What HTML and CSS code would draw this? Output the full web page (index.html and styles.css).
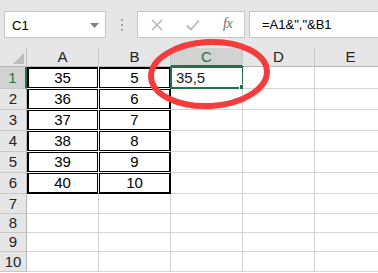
FILE: index.html
```html
<!DOCTYPE html>
<html>
<head>
<meta charset="utf-8">
<link rel="stylesheet" href="styles.css">
</head>
<body>
<div class="app">
  <div class="toolbar">
    <div class="namebox">
      <span class="name">C1</span>
      <svg class="dd" width="9" height="5" viewBox="0 0 9 5"><polygon points="0,0 9,0 4.5,5" fill="#808080"/></svg>
    </div>
    <div class="grip"><i></i><i></i><i></i></div>
    <div class="fbtns">
      <svg class="ico" width="12" height="12" viewBox="0 0 12 12"><path d="M1 1 L11 11 M11 1 L1 11" stroke="#b8b8b8" stroke-width="1.6" fill="none"/></svg>
      <svg class="ico" width="14" height="12" viewBox="0 0 14 12"><path d="M1 6.5 L5 10.5 L13 1.5" stroke="#b8b8b8" stroke-width="1.8" fill="none"/></svg>
      <span class="fx">fx</span>
    </div>
    <div class="finput">=A1&amp;","&amp;B1</div>
  </div>
  <div class="sheet">
    <div class="c corner"><svg width="11" height="11" viewBox="0 0 11 11"><polygon points="11,0 11,11 0,11" fill="#bdbdbd"/></svg></div>
    <div class="c ch">A</div>
    <div class="c ch">B</div>
    <div class="c ch sel">C</div>
    <div class="c ch">D</div>
    <div class="c ch">E</div>

    <div class="c rh sel">1</div>
    <div class="c d dl dt">35</div>
    <div class="c d dr dt">5</div>
    <div class="c active">35,5</div>
    <div class="c"></div>
    <div class="c"></div>

    <div class="c rh">2</div>
    <div class="c d dl">36</div>
    <div class="c d dr">6</div>
    <div class="c"></div>
    <div class="c"></div>
    <div class="c"></div>

    <div class="c rh">3</div>
    <div class="c d dl">37</div>
    <div class="c d dr">7</div>
    <div class="c"></div>
    <div class="c"></div>
    <div class="c"></div>

    <div class="c rh">4</div>
    <div class="c d dl">38</div>
    <div class="c d dr">8</div>
    <div class="c"></div>
    <div class="c"></div>
    <div class="c"></div>

    <div class="c rh">5</div>
    <div class="c d dl">39</div>
    <div class="c d dr">9</div>
    <div class="c"></div>
    <div class="c"></div>
    <div class="c"></div>

    <div class="c rh">6</div>
    <div class="c d dl db">40</div>
    <div class="c d dr db">10</div>
    <div class="c"></div>
    <div class="c"></div>
    <div class="c"></div>

    <div class="c rh">7</div>
    <div class="c"></div><div class="c"></div><div class="c"></div><div class="c"></div><div class="c"></div>
    <div class="c rh">8</div>
    <div class="c"></div><div class="c"></div><div class="c"></div><div class="c"></div><div class="c"></div>
    <div class="c rh">9</div>
    <div class="c"></div><div class="c"></div><div class="c"></div><div class="c"></div><div class="c"></div>
    <div class="c rh">10</div>
    <div class="c"></div><div class="c"></div><div class="c"></div><div class="c"></div><div class="c"></div>
  </div>
  <svg class="annot" width="378" height="273" viewBox="0 0 378 273">
    <ellipse cx="209" cy="74" rx="58" ry="32" fill="none" stroke="#f43c3c" stroke-width="6" transform="rotate(-3 209 74)"/>
  </svg>
</div>
</body>
</html>
```
FILE: styles.css
```css
html, body {
  margin: 0;
  padding: 0;
  background: #ffffff;
  overflow: hidden;
}
.app {
  position: relative;
  width: 378px;
  height: 273px;
  overflow: hidden;
  font-family: "Liberation Sans", Arial, sans-serif;
}
.toolbar {
  height: 48px;
  background: #e6e6e6;
  box-sizing: border-box;
  padding-top: 11px;
  padding-left: 4px;
  display: flex;
  align-items: flex-start;
}
.namebox {
  width: 102px;
  height: 27px;
  box-sizing: border-box;
  background: #fff;
  border: 1px solid #c6c6c6;
  display: flex;
  align-items: center;
  justify-content: space-between;
  padding: 0 6px 0 7px;
}
.name {
  font-size: 13px;
  color: #000;
  padding-top: 1px;
}
.dd { margin-top: 1px; }
.grip {
  width: 31px;
  height: 27px;
  display: flex;
  flex-direction: column;
  align-items: center;
  justify-content: center;
  gap: 3px;
}
.grip i {
  display: block;
  width: 2px;
  height: 2px;
  background: #a6a6a6;
}
.fbtns {
  width: 108px;
  height: 27px;
  box-sizing: border-box;
  background: #fff;
  border: 1px solid #c6c6c6;
  display: flex;
  align-items: center;
  padding-left: 13px;
}
.fbtns .ico:first-child { margin-right: 23px; }
.fbtns .ico:nth-child(2) { margin-right: 23px; }
.fx {
  font-family: "Liberation Serif", serif;
  font-style: italic;
  font-size: 14px;
  color: #6e6e6e;
  letter-spacing: -0.5px;
  padding-bottom: 1px;
}
.finput {
  margin-left: 4px;
  flex: 1 0 auto;
  height: 27px;
  box-sizing: border-box;
  background: #fff;
  border: 1px solid #c6c6c6;
  border-right: none;
  font-size: 13px;
  line-height: 25px;
  padding-left: 12px;
  color: #000;
}
.sheet {
  display: grid;
  grid-template-columns: 27px repeat(5, 72px);
  grid-template-rows: 19px 22px 21px 21px 21px 21px 21px 20px 19px 19px 20px;
  width: 387px;
}
.c {
  box-sizing: border-box;
  border-right: 1px solid #d4d4d4;
  border-bottom: 1px solid #d4d4d4;
  background: #fff;
  font-size: 15px;
  color: #000;
  display: flex;
  align-items: flex-end;
  justify-content: center;
  line-height: 18px;
  position: relative;
}
.corner {
  background: #e6e6e6;
  border-right: 1px solid #c0c0c0;
  border-bottom: 1px solid #b5b5b5;
  justify-content: flex-end;
  padding: 0 2px 2px 0;
}
.ch {
  background: #e6e6e6;
  border-right: 1px solid #c8c8c8;
  border-bottom: 1px solid #b5b5b5;
  align-items: center;
  font-size: 15px;
  color: #222;
}
.rh {
  background: #e6e6e6;
  border-right: 1px solid #b5b5b5;
  border-bottom: 1px solid #c8c8c8;
  align-items: center;
  font-size: 15px;
  color: #222;
}
.ch.sel {
  background: #d2d2d2;
  color: #217346;
  border-bottom: 2px solid #217346;
}
.rh.sel {
  background: #d2d2d2;
  color: #217346;
  border-right: 2px solid #217346;
}
.d {
  border-right-color: #fff;
  border-bottom-color: #fff;
  box-shadow: inset 0 0 0 1px #000;
  padding-bottom: 1px;
}
.d.dl { box-shadow: inset 0 0 0 1px #000, inset 2px 0 0 #000; }
.d.dl.dt { box-shadow: inset 0 0 0 1px #000, inset 2px 2px 0 #000; }
.d.dl.db { box-shadow: inset 0 0 0 1px #000, inset 2px 0 0 #000; border-bottom-color: #000; }
.d.dr { border-right-color: #000; }
.d.dr.dt { box-shadow: inset 0 0 0 1px #000, inset 0 2px 0 #000; }
.d.dr.db { border-bottom-color: #000; }
.active {
  justify-content: flex-start;
  padding-left: 5px;
  padding-bottom: 1px;
  color: #222;
}
.active::before {
  content: "";
  position: absolute;
  left: -1px;
  top: -1px;
  right: -2px;
  bottom: -1px;
  border: 2px solid #217346;
}
.active::after {
  content: "";
  position: absolute;
  right: -4px;
  bottom: -3px;
  width: 6px;
  height: 6px;
  background: #217346;
  box-shadow: 0 0 0 1px #fff;
}
.annot {
  position: absolute;
  left: 0;
  top: 0;
  pointer-events: none;
}
```
